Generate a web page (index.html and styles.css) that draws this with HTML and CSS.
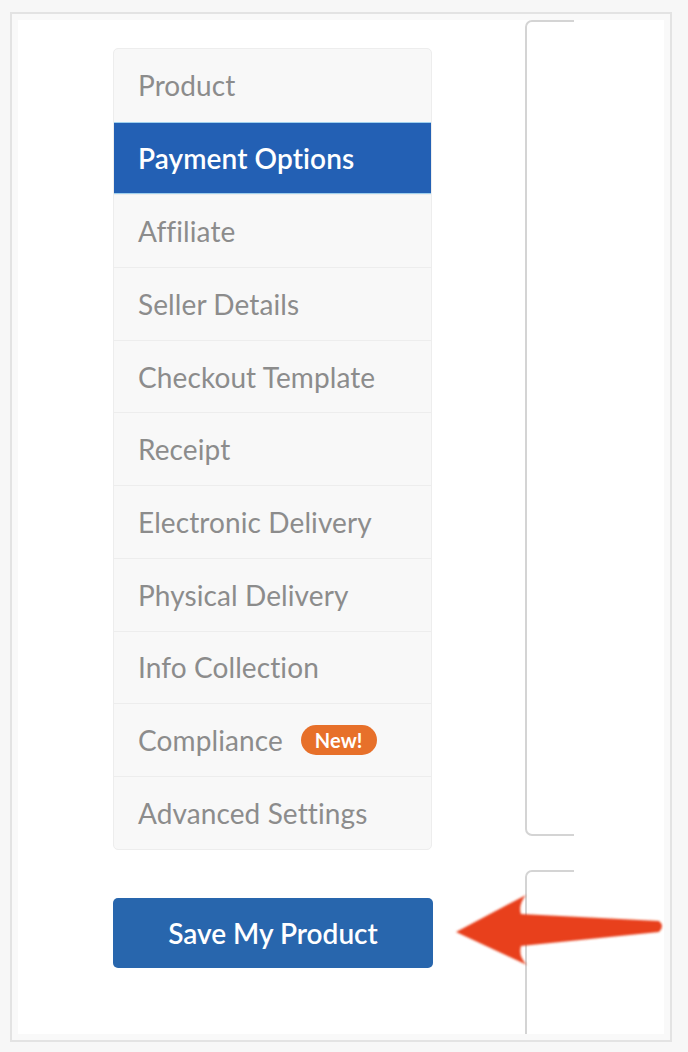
FILE: index.html
```html
<!DOCTYPE html>
<html lang="en">
<head>
    <meta charset="UTF-8">
    <title>Product Settings</title>
    <link rel="stylesheet" href="styles.css">
</head>
<body>
<div class="frame">
    <div class="sheet">
        <div class="side">
            <ul class="menu">
                <li class="menu-item">Product</li>
                <li class="menu-item active">Payment Options</li>
                <li class="menu-item">Affiliate</li>
                <li class="menu-item">Seller Details</li>
                <li class="menu-item">Checkout Template</li>
                <li class="menu-item">Receipt</li>
                <li class="menu-item">Electronic Delivery</li>
                <li class="menu-item">Physical Delivery</li>
                <li class="menu-item">Info Collection</li>
                <li class="menu-item">Compliance <span class="badge">New!</span></li>
                <li class="menu-item">Advanced Settings</li>
            </ul>
            <div class="save-btn">Save My Product</div>
        </div>
        <div class="main">
            <div class="panel panel-top"></div>
            <div class="panel panel-bottom"></div>
        </div>

        <!-- annotation arrow -->
        <svg class="arrow" width="230" height="90" viewBox="0 0 230 90">
            <defs>
                <filter id="soft" x="-10%" y="-20%" width="120%" height="140%">
                    <feGaussianBlur stdDeviation="0.8"/>
                </filter>
            </defs>
            <path d="M8 42 L78 5 Q70 15 73 24 L211 31 Q217 36 211 42 L73 56 Q70 66 79 75 Z"
                  fill="#e8401f" filter="url(#soft)"/>
        </svg>
    </div>
</div>
</body>
</html>
```

FILE: styles.css
```css
*{
    box-sizing: border-box;
}
body{
    margin: 0;
    background-color: #f7f7f7;
    font-family: Lato, "Open Sans", sans-serif;
}

.frame{
    width: 662px;
    height: 1030px;
    margin: 12px 0 0 10px;
    border: 2px solid #e3e3e3;
    background-color: #f9f9f9;
    padding: 6px;
}
.sheet{
    position: relative;
    height: 100%;
    background-color: #ffffff;
    display: flex;
    padding-left: 95px;
    overflow: hidden;
}

.side{
    width: 319px;
    padding-top: 28px;
}
.menu{
    list-style: none;
    margin: 0;
    padding: 0;
    background-color: #f8f8f8;
    border: 1px solid #ededed;
    border-radius: 5px;
    overflow: hidden;
}
.menu-item{
    height: 72.7px;
    display: flex;
    align-items: center;
    padding-left: 24px;
    font-size: 28px;
    letter-spacing: 0.1px;
    color: #8c8c8c;
    border-top: 1px solid #ededed;
}
.menu-item:first-child{
    border-top: none;
}
.menu-item.active{
    background-color: #2360b4;
    color: #ffffff;
    font-weight: 600;
    border-top: 1px solid #9fd0ee;
    border-bottom: 1px solid #9fd0ee;
}
.badge{
    display: inline-block;
    margin-left: 18px;
    padding: 0 14px;
    height: 30px;
    line-height: 30px;
    border-radius: 15px;
    background-color: #e7702a;
    color: #ffffff;
    font-size: 20px;
    font-weight: 700;
}

.save-btn{
    margin-top: 48px;
    width: 320px;
    height: 70px;
    line-height: 70px;
    text-align: center;
    background-color: #2866ad;
    color: #ffffff;
    font-size: 28px;
    font-weight: 600;
    border-radius: 5px;
}

.main{
    width: 49px;
    margin-left: 93px;
    overflow: hidden;
}
.panel{
    width: 300px;
    border: 2px solid #d4d4d4;
    border-radius: 7px;
}
.panel-top{
    height: 816px;
}
.panel-bottom{
    margin-top: 34px;
    height: 300px;
}

.arrow{
    position: absolute;
    left: 430px;
    top: 870px;
}
```
